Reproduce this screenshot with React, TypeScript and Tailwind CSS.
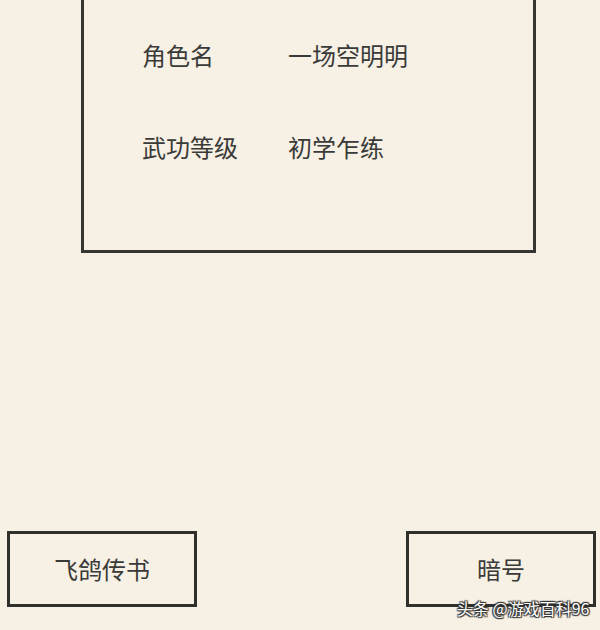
import React from "react";

const font = { fontFamily: '"Noto Sans CJK SC", "Noto Sans", sans-serif' };

export default function App() {
  return (
    <div
      className="relative w-[600px] h-[630px] overflow-hidden bg-[#f7f0e5] text-[#3a3a38]"
      style={font}
    >
      <div className="ml-[81px] w-[455px] h-[253px] border-l-[3px] border-r-[3px] border-b-[3px] border-[#363633] pt-[39px] pl-[58px]">
        <div className="flex text-[24px] leading-[32px]">
          <div className="w-[146px]">角色名</div>
          <div>一场空明明</div>
        </div>
        <div className="flex text-[24px] leading-[32px] mt-[60px]">
          <div className="w-[146px]">武功等级</div>
          <div>初学乍练</div>
        </div>
      </div>
      <div className="mt-[278px] flex justify-between pl-[7px] pr-[4px]">
        <div className="w-[190px] h-[76px] border-[3px] border-[#2f2f2c] flex items-center justify-center text-[24px]">
          飞鸽传书
        </div>
        <div className="w-[190px] h-[76px] border-[3px] border-[#2f2f2c] flex items-center justify-center text-[24px]">
          暗号
        </div>
      </div>
      <div
        className="absolute left-[457px] top-[597px] text-[16px] leading-[22px] text-white"
        style={{
          textShadow:
            "0 0 1px #333, 1px 1px 1px #333, -1px -1px 1px #333, 1px -1px 1px #333, -1px 1px 1px #333",
        }}
      >
        头条 @游戏百科96
      </div>
    </div>
  );
}
